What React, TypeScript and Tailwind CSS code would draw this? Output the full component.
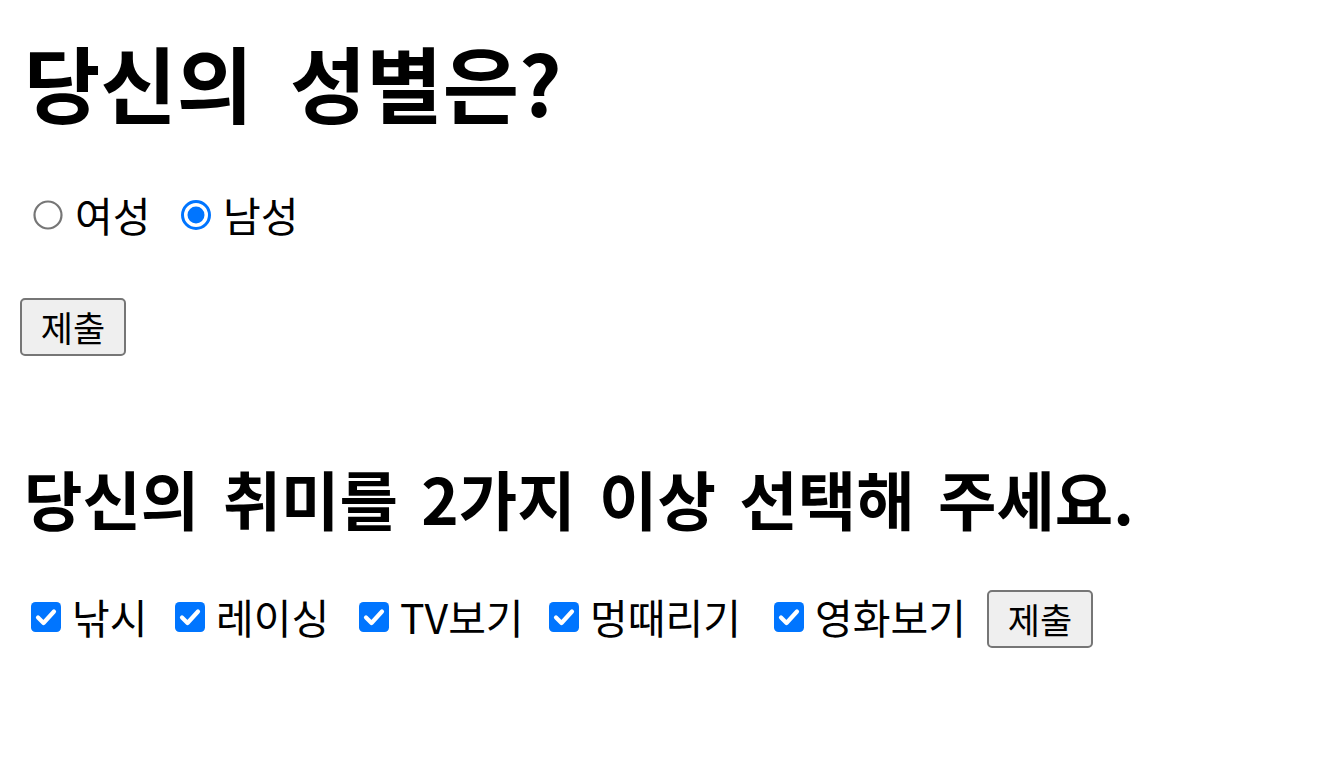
import React from "react";

function Radio({ checked }: { checked?: boolean }) {
  return (
    <svg width="30" height="30" viewBox="0 0 30 30" className="shrink-0">
      {checked ? (
        <>
          <circle cx="15" cy="15" r="13.5" fill="white" stroke="#0075ff" strokeWidth="3" />
          <circle cx="15" cy="15" r="8.5" fill="#0075ff" />
        </>
      ) : (
        <circle cx="15" cy="15" r="13.5" fill="white" stroke="#767676" strokeWidth="2.2" />
      )}
    </svg>
  );
}

function Check() {
  return (
    <svg width="30" height="30" viewBox="0 0 30 30" className="shrink-0">
      <rect x="0" y="0" width="30" height="30" rx="4.5" fill="#0075ff" />
      <path d="M7 15.5 L12.5 21 L23 9.5" fill="none" stroke="white" strokeWidth="4.2" strokeLinecap="round" strokeLinejoin="round" />
    </svg>
  );
}

function SubmitButton() {
  return (
    <button
      type="button"
      className="flex h-[58px] w-[106px] items-center justify-center rounded-[5px] border-2 border-[#767676] bg-[#efefef] text-[35px] text-black"
    >
      제출
    </button>
  );
}

const hobbies = [
  { label: "낚시", w: "w-[103px]" },
  { label: "레이싱", w: "w-[143px]" },
  { label: "TV보기", w: "w-[149px]" },
  { label: "멍때리기", w: "w-[184px]" },
  { label: "영화보기", w: "w-[172px]" },
];

export default function App() {
  return (
    <div className="min-h-screen bg-white px-[18px] font-['Noto_Sans_CJK_KR',sans-serif] text-black">
      <h1 className="pt-[33px] pl-[6px] text-[83px] font-bold leading-[96px] [word-spacing:18px]">
        당신의 성별은?
      </h1>

      <form className="flex flex-col">
        <div className="mt-[64px] flex h-[44px] items-center text-[41px]">
          <span className="ml-[15px]">
            <Radio />
          </span>
          <span className="ml-[12px] w-[106px]">여성</span>
          <Radio checked />
          <span className="ml-[12px]">남성</span>
        </div>
        <div className="mt-[61px] ml-[2px]">
          <SubmitButton />
        </div>
      </form>

      <h2 className="mt-[105px] pl-[6px] text-[63.5px] font-bold leading-[72px] [word-spacing:9px]">
        당신의 취미를 2가지 이상 선택해 주세요.
      </h2>

      <form className="mt-[53px] flex items-center text-[41px]">
        {hobbies.map((h, i) => (
          <div key={h.label} className={`mb-[4px] flex items-center ${i === 0 ? "ml-[13px]" : ""}`}>
            <Check />
            <span className={`ml-[11px] ${h.w}`}>{h.label}</span>
          </div>
        ))}
        <SubmitButton />
      </form>
    </div>
  );
}
